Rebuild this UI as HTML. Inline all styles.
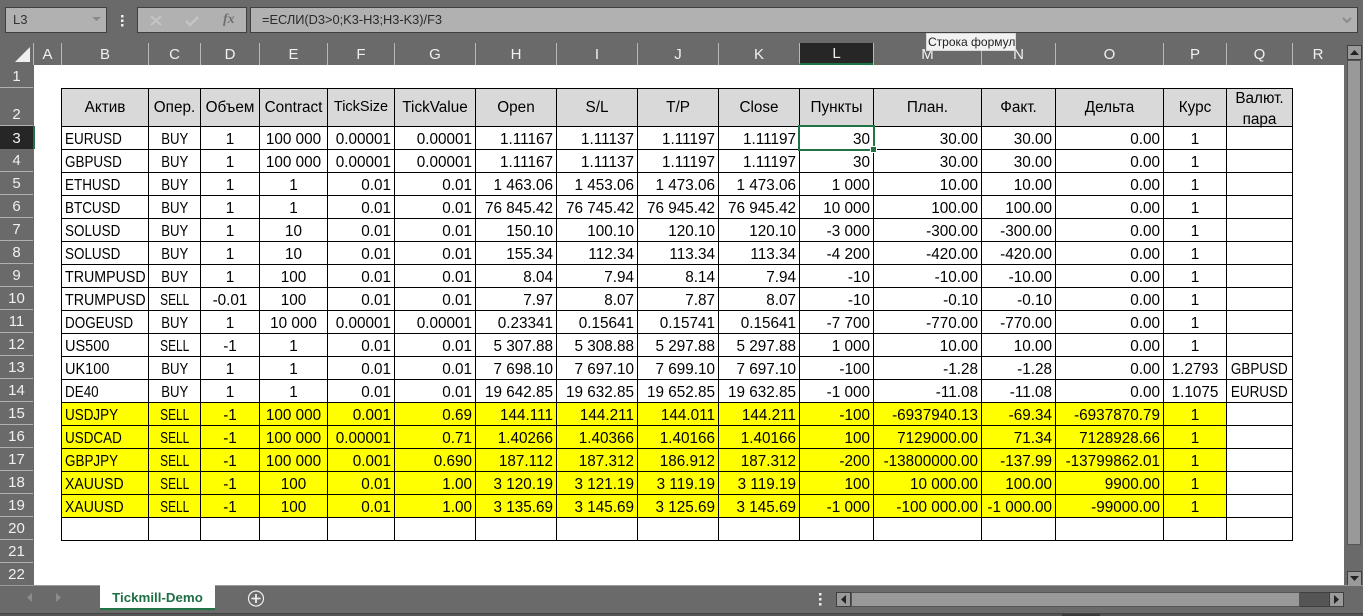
<!DOCTYPE html>
<html><head><meta charset="utf-8">
<style>
html,body{margin:0;padding:0}
body{width:1363px;height:616px;overflow:hidden;position:relative;background:#6a6a6a;font-family:"Liberation Sans",sans-serif;color:#000}
.a{position:absolute;box-sizing:border-box}
.box{background:#b1b1b1;border:1px solid #3f3f3f}
#sheet{left:34px;top:65px;width:1310px;height:520px;background:#fff}
table{position:absolute;left:61px;top:88px;width:1231px;border-collapse:collapse;table-layout:fixed;font-size:15.3px}
tr{height:23px}
td{border:1px solid #000;padding:4px 3px 0;box-sizing:border-box;line-height:18px;height:23px;white-space:nowrap;overflow:hidden;text-align:right;vertical-align:middle}
tr.h{height:38px}
tr.h td{background:#d9d9d9;height:38px;text-align:center;line-height:17px;padding:0}
td:nth-child(1){text-align:left}
td:nth-child(2),td:nth-child(3),td:nth-child(4),td:nth-child(15),td:nth-child(16){text-align:center}
tr.h td:nth-child(1){text-align:center}
tr.y td{background:#ffff00}
tr.y td.w{background:#fff}
i{font-style:normal;display:inline-block;transform:scaleX(.88);transform-origin:0 50%}
i.c{transform-origin:50% 50%;margin:0 -6px}
i.b{transform:scaleX(.86);transform-origin:50% 50%}
i.s{transform:scaleX(.78);transform-origin:50% 50%}
i.t{transform:scaleX(.93)}
i.u{transform:scaleX(.95)}
i.x{transform:scaleX(.92)}
.ch{top:43px;height:22px;color:#f0f0f0;font-size:15px;line-height:23px;text-align:center;border-left:1px solid #b8b8b8}
.rh{left:0;width:33px;color:#f0f0f0;font-size:15px;text-align:center;border-bottom:1px solid #b0b0b0;display:flex;align-items:flex-end;justify-content:center;padding-bottom:2px}
</style></head><body>
<div class="a" id="sheet"></div>

<div class="a box" style="left:5px;top:7px;width:102px;height:26px;font-size:13px;line-height:24px;padding-left:7px;color:#333">L3</div>
<svg class="a" style="left:0;top:0" width="130" height="42">
<path d="M92 17h9l-4.500 4z" fill="#8a8a8a"/>
<rect x="121" y="15" width="2.500" height="2.500" fill="#eee"/><rect x="121" y="19.500" width="2.500" height="2.500" fill="#eee"/><rect x="121" y="24" width="2.500" height="2.500" fill="#eee"/>
</svg>
<div class="a box" style="left:137px;top:7px;width:110px;height:26px"></div>
<svg class="a" style="left:0;top:0" width="260" height="42">
<path d="M151 16l10 9M161 16l-10 9" stroke="#c4c4c4" stroke-width="2"/>
<path d="M186 21l4 4 8-8" stroke="#c4c4c4" stroke-width="2.500" fill="none"/>
</svg>
<div class="a" style="left:223px;top:12px;font:italic bold 14px 'Liberation Serif',serif;color:#707070">fx</div>
<div class="a box" style="left:250px;top:7px;width:1108px;height:26px;font-size:12.800px;line-height:24px;padding-left:11px;color:#2a2a2a">=ЕСЛИ(D3&gt;0;K3-H3;H3-K3)/F3</div>
<svg class="a" style="left:1340px;top:14px" width="16" height="12"><path d="M3 4l4 4 4-4" stroke="#8a8a8a" stroke-width="2" fill="none"/></svg>

<!-- corner -->
<svg class="a" style="left:0;top:43px" width="34" height="22"><path d="M30 4v15h-15z" fill="#f0f0f0"/><path d="M33.500 0v22" stroke="#b8b8b8"/></svg>

<!-- column headers -->
<div class="a ch" style="left:34px;width:27px;border-left:0">A</div>
<div class="a ch" style="left:61px;width:87px">B</div>
<div class="a ch" style="left:148px;width:52px">C</div>
<div class="a ch" style="left:200px;width:59px">D</div>
<div class="a ch" style="left:259px;width:68px">E</div>
<div class="a ch" style="left:327px;width:67px">F</div>
<div class="a ch" style="left:394px;width:81px">G</div>
<div class="a ch" style="left:475px;width:81px">H</div>
<div class="a ch" style="left:556px;width:81px">I</div>
<div class="a ch" style="left:637px;width:81px">J</div>
<div class="a ch" style="left:718px;width:81px">K</div>
<div class="a ch" style="left:799px;width:74px;background:#262626;border-bottom:2px solid #217346;line-height:21px">L</div>
<div class="a ch" style="left:873px;width:108px">M</div>
<div class="a ch" style="left:981px;width:74px">N</div>
<div class="a ch" style="left:1055px;width:108px">O</div>
<div class="a ch" style="left:1163px;width:63px">P</div>
<div class="a ch" style="left:1226px;width:66px">Q</div>
<div class="a ch" style="left:1292px;width:51px">R</div>

<!-- row headers -->
<div class="a rh" style="top:65px;height:23px">1</div>
<div class="a rh" style="top:88px;height:38px">2</div>
<div class="a rh" style="top:126px;height:23px;background:#262626;border-bottom:0">3</div>
<div class="a" style="left:33px;top:126px;width:2px;height:23px;background:#217346"></div>
<div class="a rh" style="top:149px;height:23px">4</div>
<div class="a rh" style="top:172px;height:23px">5</div>
<div class="a rh" style="top:195px;height:23px">6</div>
<div class="a rh" style="top:218px;height:23px">7</div>
<div class="a rh" style="top:241px;height:23px">8</div>
<div class="a rh" style="top:264px;height:23px">9</div>
<div class="a rh" style="top:287px;height:23px">10</div>
<div class="a rh" style="top:310px;height:23px">11</div>
<div class="a rh" style="top:333px;height:23px">12</div>
<div class="a rh" style="top:356px;height:23px">13</div>
<div class="a rh" style="top:379px;height:23px">14</div>
<div class="a rh" style="top:402px;height:23px">15</div>
<div class="a rh" style="top:425px;height:23px">16</div>
<div class="a rh" style="top:448px;height:23px">17</div>
<div class="a rh" style="top:471px;height:23px">18</div>
<div class="a rh" style="top:494px;height:23px">19</div>
<div class="a rh" style="top:517px;height:23px">20</div>
<div class="a rh" style="top:540px;height:23px">21</div>
<div class="a rh" style="top:563px;height:22px;border-bottom:0">22</div>

<table>
<colgroup><col style="width:87px"><col style="width:52px"><col style="width:59px"><col style="width:68px"><col style="width:67px"><col style="width:81px"><col style="width:81px"><col style="width:81px"><col style="width:81px"><col style="width:81px"><col style="width:74px"><col style="width:108px"><col style="width:74px"><col style="width:108px"><col style="width:63px"><col style="width:66px"></colgroup>
<tr class="h"><td>Актив</td><td>Опер.</td><td>Объем</td><td>Contract</td><td style="font-size:14.500px">TickSize</td><td>TickValue</td><td>Open</td><td>S/L</td><td>T/P</td><td>Close</td><td>Пункты</td><td>План.</td><td>Факт.</td><td>Дельта</td><td>Курс</td><td style="overflow:visible"><span style="position:relative;top:-1px">Валют.</span><br><span style="position:relative;top:3px">пара</span></td></tr>
<tr><td><i>EURUSD</i></td><td><i class="b">BUY</i></td><td>1</td><td>100 000</td><td>0.00001</td><td>0.00001</td><td>1.11167</td><td>1.11137</td><td>1.11197</td><td>1.11197</td><td>30</td><td>30.00</td><td>30.00</td><td>0.00</td><td>1</td><td></td></tr>
<tr><td><i>GBPUSD</i></td><td><i class="b">BUY</i></td><td>1</td><td>100 000</td><td>0.00001</td><td>0.00001</td><td>1.11167</td><td>1.11137</td><td>1.11197</td><td>1.11197</td><td>30</td><td>30.00</td><td>30.00</td><td>0.00</td><td>1</td><td></td></tr>
<tr><td><i>ETHUSD</i></td><td><i class="b">BUY</i></td><td>1</td><td>1</td><td>0.01</td><td>0.01</td><td>1 463.06</td><td>1 453.06</td><td>1 473.06</td><td>1 473.06</td><td>1 000</td><td>10.00</td><td>10.00</td><td>0.00</td><td>1</td><td></td></tr>
<tr><td><i>BTCUSD</i></td><td><i class="b">BUY</i></td><td>1</td><td>1</td><td>0.01</td><td>0.01</td><td>76 845.42</td><td>76 745.42</td><td>76 945.42</td><td>76 945.42</td><td>10 000</td><td>100.00</td><td>100.00</td><td>0.00</td><td>1</td><td></td></tr>
<tr><td><i>SOLUSD</i></td><td><i class="b">BUY</i></td><td>1</td><td>10</td><td>0.01</td><td>0.01</td><td>150.10</td><td>100.10</td><td>120.10</td><td>120.10</td><td>-3 000</td><td>-300.00</td><td>-300.00</td><td>0.00</td><td>1</td><td></td></tr>
<tr><td><i>SOLUSD</i></td><td><i class="b">BUY</i></td><td>1</td><td>10</td><td>0.01</td><td>0.01</td><td>155.34</td><td>112.34</td><td>113.34</td><td>113.34</td><td>-4 200</td><td>-420.00</td><td>-420.00</td><td>0.00</td><td>1</td><td></td></tr>
<tr><td><i class="t">TRUMPUSD</i></td><td><i class="b">BUY</i></td><td>1</td><td>100</td><td>0.01</td><td>0.01</td><td>8.04</td><td>7.94</td><td>8.14</td><td>7.94</td><td>-10</td><td>-10.00</td><td>-10.00</td><td>0.00</td><td>1</td><td></td></tr>
<tr><td><i class="t">TRUMPUSD</i></td><td><i class="s">SELL</i></td><td>-0.01</td><td>100</td><td>0.01</td><td>0.01</td><td>7.97</td><td>8.07</td><td>7.87</td><td>8.07</td><td>-10</td><td>-0.10</td><td>-0.10</td><td>0.00</td><td>1</td><td></td></tr>
<tr><td><i>DOGEUSD</i></td><td><i class="b">BUY</i></td><td>1</td><td>10 000</td><td>0.00001</td><td>0.00001</td><td>0.23341</td><td>0.15641</td><td>0.15741</td><td>0.15641</td><td>-7 700</td><td>-770.00</td><td>-770.00</td><td>0.00</td><td>1</td><td></td></tr>
<tr><td><i class="u">US500</i></td><td><i class="s">SELL</i></td><td>-1</td><td>1</td><td>0.01</td><td>0.01</td><td>5 307.88</td><td>5 308.88</td><td>5 297.88</td><td>5 297.88</td><td>1 000</td><td>10.00</td><td>10.00</td><td>0.00</td><td>1</td><td></td></tr>
<tr><td><i class="u">UK100</i></td><td><i class="b">BUY</i></td><td>1</td><td>1</td><td>0.01</td><td>0.01</td><td>7 698.10</td><td>7 697.10</td><td>7 699.10</td><td>7 697.10</td><td>-100</td><td>-1.28</td><td>-1.28</td><td>0.00</td><td>1.2793</td><td><i class="c">GBPUSD</i></td></tr>
<tr><td><i>DE40</i></td><td><i class="b">BUY</i></td><td>1</td><td>1</td><td>0.01</td><td>0.01</td><td>19 642.85</td><td>19 632.85</td><td>19 652.85</td><td>19 632.85</td><td>-1 000</td><td>-11.08</td><td>-11.08</td><td>0.00</td><td>1.1075</td><td><i class="c">EURUSD</i></td></tr>
<tr class="y"><td><i>USDJPY</i></td><td><i class="s">SELL</i></td><td>-1</td><td>100 000</td><td>0.001</td><td>0.69</td><td>144.111</td><td>144.211</td><td>144.011</td><td>144.211</td><td>-100</td><td>-6937940.13</td><td>-69.34</td><td>-6937870.79</td><td>1</td><td class="w"></td></tr>
<tr class="y"><td><i>USDCAD</i></td><td><i class="s">SELL</i></td><td>-1</td><td>100 000</td><td>0.00001</td><td>0.71</td><td>1.40266</td><td>1.40366</td><td>1.40166</td><td>1.40166</td><td>100</td><td>7129000.00</td><td>71.34</td><td>7128928.66</td><td>1</td><td class="w"></td></tr>
<tr class="y"><td><i>GBPJPY</i></td><td><i class="s">SELL</i></td><td>-1</td><td>100 000</td><td>0.001</td><td>0.690</td><td>187.112</td><td>187.312</td><td>186.912</td><td>187.312</td><td>-200</td><td>-13800000.00</td><td>-137.99</td><td>-13799862.01</td><td>1</td><td class="w"></td></tr>
<tr class="y"><td><i class="x">XAUUSD</i></td><td><i class="s">SELL</i></td><td>-1</td><td>100</td><td>0.01</td><td>1.00</td><td>3 120.19</td><td>3 121.19</td><td>3 119.19</td><td>3 119.19</td><td>100</td><td>10 000.00</td><td>100.00</td><td>9900.00</td><td>1</td><td class="w"></td></tr>
<tr class="y"><td><i class="x">XAUUSD</i></td><td><i class="s">SELL</i></td><td>-1</td><td>100</td><td>0.01</td><td>1.00</td><td>3 135.69</td><td>3 145.69</td><td>3 125.69</td><td>3 145.69</td><td>-1 000</td><td>-100 000.00</td><td>-1 000.00</td><td>-99000.00</td><td>1</td><td class="w"></td></tr>
<tr><td></td><td></td><td></td><td></td><td></td><td></td><td></td><td></td><td></td><td></td><td></td><td></td><td></td><td></td><td></td><td></td></tr>
</table>

<!-- selection -->
<div class="a" style="left:798px;top:125px;width:77px;height:26px;border:2px solid #217346"></div>
<div class="a" style="left:871px;top:147px;width:5px;height:5px;background:#217346;outline:1px solid #fff"></div>

<!-- tooltip -->
<div class="a" style="left:926px;top:33px;width:90px;height:18px;background:#f2f2f2;border:1px solid #d8d8d8;font-size:12px;line-height:17px;padding-left:1px;color:#222;white-space:nowrap;overflow:hidden">Строка формул</div>

<!-- vertical scrollbar -->
<div class="a" style="left:1344px;top:65px;width:19px;height:520px;background:#6a6a6a"></div>
<div class="a" style="left:1347px;top:45px;width:15px;height:15px;background:#9a9a9a;border:1px solid #3f3f3f"></div>
<svg class="a" style="left:1347px;top:45px" width="15" height="15"><path d="M3 10h9l-4.500-5z" fill="#222"/></svg>
<div class="a" style="left:1347px;top:60px;width:14px;height:485px;background:#999;border:1px solid #555"></div>
<div class="a" style="left:1347px;top:571px;width:15px;height:15px;background:#9a9a9a;border:1px solid #3f3f3f"></div>
<svg class="a" style="left:1347px;top:571px" width="15" height="15"><path d="M3 5h9l-4.500 5z" fill="#222"/></svg>

<!-- bottom bar -->
<div class="a" style="left:0;top:585px;width:1363px;height:1px;background:#9a9a9a"></div>
<div class="a" style="left:0;top:613px;width:1363px;height:3px;background:#555;border-top:1px solid #444"></div>
<svg class="a" style="left:0;top:586px" width="300" height="27">
<path d="M32 7v9l-5-4.500z" fill="#8c8c8c"/><path d="M56 7v9l5-4.500z" fill="#8c8c8c"/>
<circle cx="256" cy="12.500" r="7.500" fill="none" stroke="#eee" stroke-width="1.200"/>
<path d="M256 8v9M251.500 12.500h9" stroke="#eee" stroke-width="1.800"/>
</svg>
<div class="a" style="left:100px;top:585px;width:115px;height:25px;background:#fff;border-bottom:2px solid #217346;color:#1f6e45;font-weight:bold;font-size:13.300px;line-height:26px;text-align:center">Tickmill-Demo</div>
<svg class="a" style="left:816px;top:590px" width="8" height="22"><rect x="3" y="3" width="2.500" height="2.500" fill="#eee"/><rect x="3" y="8" width="2.500" height="2.500" fill="#eee"/><rect x="3" y="13" width="2.500" height="2.500" fill="#eee"/></svg>

<!-- horizontal scrollbar -->
<div class="a" style="left:836px;top:592px;width:508px;height:15px;background:#555;border:1px solid #3f3f3f"></div>
<div class="a" style="left:836px;top:592px;width:15px;height:15px;background:#9a9a9a;border:1px solid #3f3f3f"></div>
<div class="a" style="left:851px;top:592px;width:449px;height:15px;background:#999;border:1px solid #555"></div>
<div class="a" style="left:1329px;top:592px;width:15px;height:15px;background:#9a9a9a;border:1px solid #3f3f3f"></div>
<svg class="a" style="left:836px;top:592px" width="508" height="15"><path d="M10 3v9l-5-4.500z" fill="#222"/><path d="M498 3v9l5-4.500z" fill="#222"/></svg>
<div class="a" style="left:1062px;top:614px;width:38px;height:2px;background:#3a3a3a"></div>
</body></html>
